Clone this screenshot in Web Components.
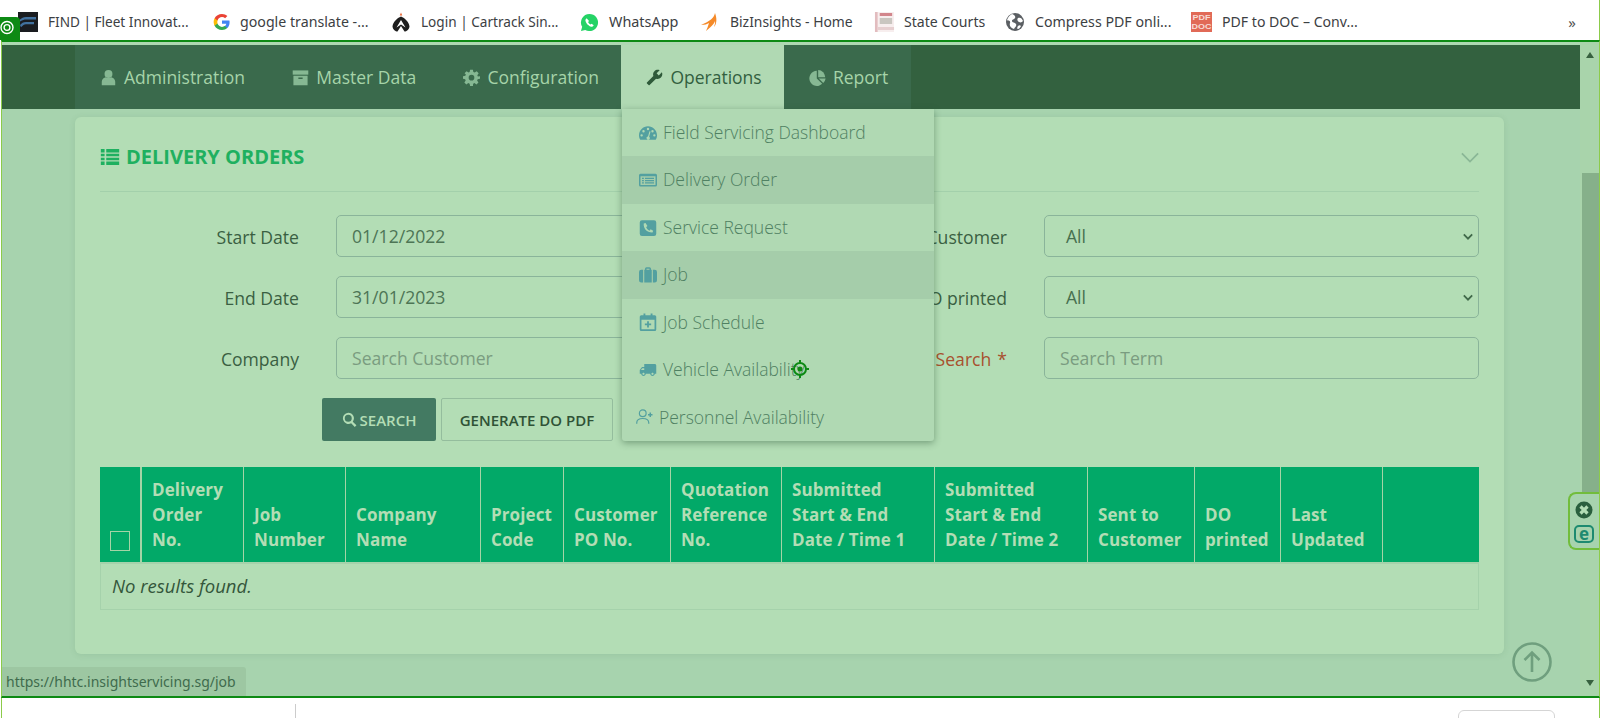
<!DOCTYPE html>
<html lang="en">
<head>
<meta charset="utf-8">
<title>Delivery Orders</title>
<style>
    html, body { margin: 0; padding: 0; background: #fff; overflow: hidden; }
    body { font-family: "Open Sans", "Liberation Sans", sans-serif; width: 1600px; height: 718px; }
</style>
</head>
<body>
<bookmark-bar>
    <bookmark-item icon="find" gap="10" width="194" size="13.6">FIND | Fleet Innovat...</bookmark-item>
    <bookmark-item icon="google" gap="8" width="179" size="14.2">google translate -...</bookmark-item>
    <bookmark-item icon="cartrack" gap="10" width="189" size="13.6">Login | Cartrack Sin...</bookmark-item>
    <bookmark-item icon="whatsapp" gap="10" width="120" size="14.4">WhatsApp</bookmark-item>
    <bookmark-item icon="biz" gap="10" width="174" size="13.9">BizInsights - Home</bookmark-item>
    <bookmark-item icon="courts" gap="9" width="132" size="14.1">State Courts</bookmark-item>
    <bookmark-item icon="globe" gap="11" width="185" size="14.2">Compress PDF onli...</bookmark-item>
    <bookmark-item icon="pdf" gap="10" width="170" size="14.1">PDF to DOC – Conv...</bookmark-item>
    <span slot="more">»</span>
</bookmark-bar>

<app-frame>
    <main-nav>
        <nav-item icon="user">Administration</nav-item>
        <nav-item icon="archive">Master Data</nav-item>
        <nav-item icon="cog">Configuration</nav-item>
        <nav-item icon="wrench" active>Operations</nav-item>
        <nav-item icon="pie">Report</nav-item>
    </main-nav>

    <order-card heading="Delivery Orders">
        <form-grid>
            <form-field label="Start Date" value="01/12/2022"></form-field>
            <form-field label="Sent to Customer" value="All" select></form-field>
            <form-field label="End Date" value="31/01/2023"></form-field>
            <form-field label="DO printed" value="All" select></form-field>
            <form-field label="Company" placeholder="Search Customer"></form-field>
            <form-field label="Search" placeholder="Search Term" required></form-field>
        </form-grid>
        <action-row></action-row>
        <orders-table></orders-table>
    </order-card>

    <op-menu slot="overlay">
        <op-menu-item icon="gauge">Field Servicing Dashboard</op-menu-item>
        <op-menu-item icon="listalt" hover>Delivery Order</op-menu-item>
        <op-menu-item icon="phone">Service Request</op-menu-item>
        <op-menu-item icon="case" hover>Job</op-menu-item>
        <op-menu-item icon="calendar">Job Schedule</op-menu-item>
        <op-menu-item icon="truck">Vehicle Availability</op-menu-item>
        <op-menu-item icon="userplus" tight>Personnel Availability</op-menu-item>
    </op-menu>
    <overlay-bits slot="overlay"></overlay-bits>
</app-frame>

<footer-strip></footer-strip>

<script>
    const ICONS = {
        user: '<circle cx="12" cy="7" r="5.6"/><path d="M2.500 23v-5C2.500 14 6 12 8 11.500c2.400 1.600 5.600 1.600 8 0 2 .5 5.500 2.500 5.500 6.500v5z"/>',
        archive: '<path d="M1 2h22v6H1z"/><path d="M2 9.500h20V23H2zM9 12v2.200h6V12z" fill-rule="evenodd"/>',
        cog: '<path fill-rule="evenodd" d="M10 1h4l.6 3.300 1.900.8L19.300 3.200l2.800 2.800-1.900 2.800.8 1.900L24 10.300v3.400l-3.300.6-.8 1.900 1.900 2.800-2.800 2.800-2.800-1.900-1.900.8L14 24h-4l-.6-3.300-1.900-.8-2.800 1.900-2.800-2.800 1.900-2.800-.8-1.900L0 13.700v-3.400l3.300-.6.8-1.900L2.200 6 5 3.200l2.800 1.900 1.600-.8zM12 8.200a4 4 0 1 0 0 8 4 4 0 0 0 0-8z"/>',
        wrench: '<path transform="translate(24 0) scale(-1 1)" d="M22.700 19l-9.100-9.100c.9-2.300.4-5-1.500-6.900-2-2-5-2.400-7.400-1.300L9 6 6 9 1.600 4.700C.4 7.100.9 10.100 2.900 12.100c1.900 1.900 4.600 2.400 6.900 1.500l9.100 9.100c.4.4 1 .4 1.400 0l2.300-2.300c.5-.4.5-1.100.1-1.400z"/>',
        pie: '<path d="M11 2.500v10.800l7.600 7.600A10.700 10.700 0 1 1 11 2.500z"/><path d="M13 1.500a10.500 10.500 0 0 1 10 10H13z"/><path d="M13.800 13.500H23.500a10.500 10.500 0 0 1-3.400 6.300z"/>',
        list: '<path d="M1 2.500h4.500v4H1zM7.500 2.500H23v4H7.500zM1 8h4.500v3.200H1zM7.500 8H23v3.200H7.500zM1 12.800h4.500V16H1zM7.500 12.800H23V16H7.500zM1 17.500h4.500v4H1zM7.500 17.500H23v4H7.500z"/>',
        search: '<path fill-rule="evenodd" d="M10 1a9 9 0 0 1 7.200 14.400l5.900 5.900-2.600 2.600-5.900-5.900A9 9 0 1 1 10 1zm0 3.400a5.600 5.600 0 1 0 0 11.200 5.600 5.600 0 0 0 0-11.200z"/>',
        gauge: '<path fill-rule="evenodd" d="M12 3C5.400 3 0 8.400 0 15c0 2.200.6 4.300 1.700 6h20.600c1.100-1.700 1.700-3.800 1.700-6 0-6.600-5.400-12-12-12zM12 5a1.600 1.600 0 1 1 0 3.200A1.600 1.600 0 0 1 12 5zM6 8a1.600 1.600 0 1 1 0 3.200A1.600 1.600 0 0 1 6 8zm12 0a1.600 1.600 0 1 1 0 3.200A1.600 1.600 0 0 1 18 8zM3.500 13.500a1.600 1.600 0 1 1 0 3.200 1.600 1.600 0 0 1 0-3.200zm17 0a1.600 1.600 0 1 1 0 3.200 1.600 1.600 0 0 1 0-3.200zM14 9.500l1.400.4-1.900 7a2.200 2.200 0 1 1-1.500-.3z"/>',
        listalt: '<path fill-rule="evenodd" d="M2 3.500h20a2 2 0 0 1 2 2v13a2 2 0 0 1-2 2H2a2 2 0 0 1-2-2v-13a2 2 0 0 1 2-2zm0 3.500v11.500h20V7zm2 2h2.500v1.700H4zm4 0h12v1.700H8zm-4 3h2.500v1.700H4zm4 0h12v1.700H8zm-4 3h2.500v1.700H4zm4 0h12v1.700H8z"/>',
        phone: '<path fill-rule="evenodd" d="M4 1.500h16a3 3 0 0 1 3 3v15a3 3 0 0 1-3 3H4a3 3 0 0 1-3-3v-15a3 3 0 0 1 3-3zm4.700 3.700L6.300 6c-.7 7 4.700 12.400 11.700 12l.9-2.500-3.400-1.700-1.500 1.700c-2-1-3.700-2.700-4.500-4.600l1.700-1.500z"/>',
        case: '<path fill-rule="evenodd" d="M8 5V3.500A2 2 0 0 1 10 1.500h4a2 2 0 0 1 2 2V5h1v17H7V5zm2-1.500V5h4V3.500zM5.500 5v17H3a3 3 0 0 1-3-3V8a3 3 0 0 1 3-3zm13 0H21a3 3 0 0 1 3 3v11a3 3 0 0 1-3 3h-2.500z"/>',
        calendar: '<path fill-rule="evenodd" d="M6 .5h2.500V3h7V.5H18V3h3a2 2 0 0 1 2 2v17a2 2 0 0 1-2 2H3a2 2 0 0 1-2-2V5a2 2 0 0 1 2-2h3zM3.300 9v12.700h17.400V9zM10.800 11h2.400v3h3v2.400h-3v3h-2.400v-3h-3V14h3z"/>',
        truck: '<path transform="translate(24 0) scale(-1 1)" d="M20 8h-3V4H3c-1.100 0-2 .9-2 2v11h2c0 1.660 1.340 3 3 3s3-1.340 3-3h6c0 1.660 1.340 3 3 3s3-1.340 3-3h2v-5l-3-4zM6 18.500c-.83 0-1.500-.67-1.500-1.500s.67-1.500 1.500-1.500 1.500.67 1.500 1.500-.67 1.500-1.500 1.500zm13.500-9l1.960 2.500H17V9.500h2.500zm-1.500 9c-.83 0-1.500-.67-1.500-1.500s.67-1.500 1.500-1.500 1.500.67 1.500 1.500-.67 1.500-1.500 1.500z"/>',
        userplus: '<g fill="none" stroke="currentColor" stroke-width="1.600"><circle cx="9" cy="7" r="4.500"/><path d="M1 21v-1.500C1 16 4 14 9 14s8 2 8 5.500V21"/><path d="M19 6v6M16 9h6" stroke-width="2"/></g>'
    };

    class AppIcon extends HTMLElement {
        connectedCallback() {
            const size = this.getAttribute('size') || 17;
            const shadow = this.attachShadow({ mode: 'open' });
            shadow.innerHTML = `
                <style>
                    :host { display: inline-flex; flex: none; width: ${size}px; height: ${size}px; color: inherit; }
                    svg { width: 100%; height: 100%; fill: currentColor; }
                </style>
                <svg viewBox="0 0 24 24">${ICONS[this.getAttribute('name')] || ''}</svg>`;
        }
    }
    customElements.define('app-icon', AppIcon);

    // favicons of the bookmark bar
    const FAVICONS = {
        find: '<rect width="20" height="20" fill="#1a1c20"/><path d="M2 7.500C4 6 5 5 8 5h10v2.500H8c-2 0-3 .5-6 2zM2 13c2-2 3-3 6-3h8v2.200H8c-2 0-3 1-5 3z" fill="#41719f"/>',
        google: '<path d="M17.600 10.200c0-.6-.1-1.200-.2-1.700H10v3.200h4.300c-.2 1-.8 1.900-1.600 2.400v2h2.600c1.500-1.400 2.300-3.400 2.300-5.900z" fill="#4285f4"/><path d="M10 18c2.200 0 4-.7 5.300-1.900l-2.600-2c-.7.5-1.600.8-2.700.8-2.100 0-3.900-1.400-4.500-3.300H2.600v2.100C3.900 16.300 6.700 18 10 18z" fill="#34a853"/><path d="M5.500 11.600c-.3-1-.3-2.200 0-3.200V6.300H2.600a8 8 0 0 0 0 7.400z" fill="#fbbc05"/><path d="M10 5.100c1.200 0 2.200.4 3.100 1.200l2.300-2.300C14 2.700 12.200 2 10 2 6.700 2 3.900 3.700 2.600 6.300l2.900 2.100C6.100 6.500 7.900 5.100 10 5.100z" fill="#ea4335"/>',
        cartrack: '<path d="M10 4.500C14 6 18 10 18.500 14.500 18 18 15.500 19.500 13.500 19.500L10 14 6.500 19.500C4.500 19.500 2 18 1.500 14.500 2 10 6 6 10 4.500z" fill="#1e1e1e"/><path d="M10 8l4.500 7.500-4.500-3-4.500 3z" fill="#fff"/><path d="M10 .5l1.300 3h-2.600z" fill="#e8612c"/>',
        whatsapp: '<path d="M10 1a9 9 0 0 0-7.700 13.600L1 19l4.500-1.200A9 9 0 1 0 10 1z" fill="#25d366"/><path d="M7 5.500L5.700 7c-.4 3 3.700 7.500 7.300 7.500l1.500-1.500-2.300-1.700-1.200.9c-1.100-.5-2-1.500-2.500-2.600l1-1.100z" fill="#fff"/>',
        biz: '<path d="M15 1C14 6 10 9 1 13c4 0 6-1 8-2-1 3-2 6-3 8 4-3 8-7 9-10 .5 2-.5 4-1 6 3-3 3-9 1-14z" fill="#f58a29"/>',
        courts: '<rect x="1" y="1" width="3" height="20" fill="#e2bcbf"/><rect x="4" y="1" width="17" height="20" fill="#f7eeee"/><rect x="6" y="7" width="13" height="6" fill="#c9c6c0"/><rect x="4" y="16" width="17" height="3" fill="#e6cfd0"/><rect x="6" y="2" width="13" height="3" fill="#d2868c"/>',
        globe: '<circle cx="9" cy="9" r="9" fill="#5b5f63"/><path d="M6 1c2 1 4 2 3 4s-3 1-3 3 3 1 4 3-1 3-2 5C5 15 3 13 4 10S1 8 1 7c1-3 3-5 5-6zM12 5c2-1 4 0 5 3-1 1-2 2-4 1s-2-3-1-4zM12 13c1-1 2-1 3 0-1 2-2 3-3 3s-1-2 0-3z" fill="#fff"/>',
        pdf: '<rect width="21" height="27" fill="#e16a57"/><text x="10.500" y="11" font-family="Liberation Sans" font-size="9" font-weight="700" text-anchor="middle" fill="#f7dcd6">PDF</text><text x="10.500" y="22.500" font-family="Liberation Sans" font-size="9" font-weight="700" text-anchor="middle" fill="#f7dcd6">DOC</text>'
    };
    const FAV_BOX = {
        find: [20, 20, '0 0 20 20'], google: [20, 20, '0 0 20 20'], cartrack: [20, 20, '0 0 20 20'],
        whatsapp: [19, 19, '0 0 20 20'], biz: [20, 20, '0 0 20 20'], courts: [21, 22, '0 0 22 22'],
        globe: [18, 18, '0 0 18 18'], pdf: [21, 20, '0 0 21 27']
    };

    class BookmarkItem extends HTMLElement {
        connectedCallback() {
            const name = this.getAttribute('icon');
            const box = FAV_BOX[name];
            const size = this.getAttribute('size');
            const shadow = this.attachShadow({ mode: 'open' });
            shadow.innerHTML = `
                <style>
                    :host { display: flex; align-items: center; gap: ${this.getAttribute('gap')}px; width: ${this.getAttribute('width')}px; flex: none; white-space: nowrap; ${size ? `font-size: ${size}px;` : ''} }
                    svg { flex: none; }
                </style>
                <svg width="${box[0]}" height="${box[1]}" viewBox="${box[2]}" preserveAspectRatio="none">${FAVICONS[name]}</svg>
                <span><slot></slot></span>`;
        }
    }
    customElements.define('bookmark-item', BookmarkItem);

    class BookmarkBar extends HTMLElement {
        constructor() {
            super();
            this.attachShadow({ mode: 'open' }).innerHTML = `
                <style>
                    :host {
                        display: flex; align-items: center; height: 40px; box-sizing: border-box;
                        padding: 4px 0 0 18px; background: #fff; color: #3c4043;
                        font: 14px/20px "Noto Sans", "Open Sans", sans-serif;
                        border-right: 1px solid #8ccb4a;
                    }
                    ::slotted([slot="more"]) { margin-left: auto; margin-right: 23px; color: #555; font-size: 15px; }
                </style>
                <slot></slot><slot name="more"></slot>`;
        }
    }
    customElements.define('bookmark-bar', BookmarkBar);

    class AppFrame extends HTMLElement {
        constructor() {
            super();
            this.attachShadow({ mode: 'open' }).innerHTML = `
                <style>
                    :host {
                        display: grid; grid-template-columns: 1fr 19px; height: 658px; box-sizing: border-box;
                        margin-left: 1px; position: relative; overflow: hidden;
                        border-top: 2px solid #0d8a14; border-bottom: 2px solid #0d8a14;
                        border-left: 1px solid #8ccb4a; border-right: 1px solid #8ccb4a;
                        background: #a7d3ae;
                    }
                    .main { padding-top: 3px; background: linear-gradient(#aed8b2 3px, transparent 3px); min-width: 0; }
                    .bar { display: flex; flex-direction: column; background: #a9d4ab; color: #37613f; align-items: center; padding-top: 10px; }
                    .up, .down { width: 0; height: 0; border-left: 4.500px solid transparent; border-right: 4.500px solid transparent; }
                    .up { border-bottom: 6px solid #37613f; }
                    .down { border-top: 6px solid #37613f; margin-top: 188px; }
                    .thumb { align-self: flex-end; width: 17px; height: 319px; margin-top: 115px; background: #86b08a; }
                </style>
                <div class="main"><slot></slot></div>
                <div class="bar"><i class="up"></i><div class="thumb"></div><i class="down"></i></div>
                <slot name="overlay"></slot>`;
        }
    }
    customElements.define('app-frame', AppFrame);

    class MainNav extends HTMLElement {
        constructor() {
            super();
            this.attachShadow({ mode: 'open' }).innerHTML = `
                <style>
                    :host { display: block; height: 64px; padding-left: 73px; background: #33613f; }
                    .in { display: flex; width: 836px; height: 100%; background: #3a6a4c; }
                </style>
                <div class="in"><slot></slot></div>`;
        }
    }
    customElements.define('main-nav', MainNav);

    class NavItem extends HTMLElement {
        connectedCallback() {
            const active = this.hasAttribute('active');
            const shadow = this.attachShadow({ mode: 'open' });
            shadow.innerHTML = `
                <style>
                    :host {
                        display: flex; align-items: center; gap: 7px; padding: 0 22.300px 0 25px; white-space: nowrap;
                        font: 17.500px/24px "Open Sans", sans-serif;
                        color: ${active ? '#33603f' : '#a6d4a9'};
                        background: ${active ? '#b0d9b3' : 'transparent'};
                    }
                    app-icon { color: ${active ? '#2f5a3a' : '#86b893'}; }
                </style>
                <app-icon name="${this.getAttribute('icon')}"></app-icon><span><slot></slot></span>`;
        }
    }
    customElements.define('nav-item', NavItem);

    class OrderCard extends HTMLElement {
        connectedCallback() {
            const shadow = this.attachShadow({ mode: 'open' });
            shadow.innerHTML = `
                <style>
                    :host {
                        display: block; width: 1429px; box-sizing: border-box; margin: 8px 0 0 73px; padding: 0 25px 44px 25px;
                        background: #b3ddb5; border-radius: 6px; box-shadow: 0 1px 6px rgba(60, 110, 70, .12);
                    }
                    header {
                        display: flex; align-items: center; height: 75px; box-sizing: border-box; padding-top: 6px;
                        border-bottom: 1px solid #a3d0ab; margin-bottom: 23px; width: 1379px;
                        color: #1fb060; font: 700 20px/24px "Open Sans", sans-serif; text-transform: uppercase;
                    }
                    h2 { margin: 0 0 0 6px; font: inherit; flex: 1; }
                    svg { width: 18px; height: 11px; fill: none; stroke: #8ab796; stroke-width: 2; }
                </style>
                <header>
                    <app-icon name="list" size="20"></app-icon>
                    <h2>${this.getAttribute('heading')}</h2>
                    <svg viewBox="0 0 20 12"><path d="M1 1.500l9 9 9-9"/></svg>
                </header>
                <slot></slot>`;
        }
    }
    customElements.define('order-card', OrderCard);

    class FormGrid extends HTMLElement {
        constructor() {
            super();
            this.attachShadow({ mode: 'open' }).innerHTML = `
                <style>
                    :host { display: grid; grid-template-columns: 670px 672px; column-gap: 37px; row-gap: 19px; width: 1379px; }
                </style>
                <slot></slot>`;
        }
    }
    customElements.define('form-grid', FormGrid);

    class FormField extends HTMLElement {
        connectedCallback() {
            const value = this.getAttribute('value');
            const holder = this.getAttribute('placeholder');
            const isSelect = this.hasAttribute('select');
            const required = this.hasAttribute('required');
            const shadow = this.attachShadow({ mode: 'open' });
            shadow.innerHTML = `
                <style>
                    :host {
                        display: grid; grid-template-columns: 1fr auto; column-gap: 37px; align-items: center;
                        font: 17.600px/24px "Open Sans", sans-serif; color: #3a5f42;
                    }
                    label { text-align: right; white-space: nowrap; padding-top: 1px; }
                    label.req { color: #a8502e; }
                    label b { font-weight: 400; margin-left: 6px; }
                    .control {
                        display: flex; align-items: center; justify-content: space-between; height: 42px; width: ${isSelect || required ? 435 : 434}px; box-sizing: border-box;
                        padding: 0 5px 0 15px; border: 1px solid #8ab49a; border-radius: 5px; color: #4d7555;
                    }
                    .control.sel { padding-left: 21px; color: #47704f; }
                    .holder { color: #7a9c80; }
                    svg { width: 10px; height: 7px; fill: none; stroke: #41694a; stroke-width: 2.200; }
                </style>
                <label class="${required ? 'req' : ''}">${this.getAttribute('label')}${required ? '<b>*</b>' : ''}</label>
                <div class="control ${isSelect ? 'sel' : ''}">
                    ${holder ? `<span class="holder">${holder}</span>` : `<span>${value}</span>`}
                    ${isSelect ? '<svg viewBox="0 0 12 8"><path d="M1 1.500l5 5 5-5"/></svg>' : ''}
                </div>`;
        }
    }
    customElements.define('form-field', FormField);

    class ActionRow extends HTMLElement {
        constructor() {
            super();
            this.attachShadow({ mode: 'open' }).innerHTML = `
                <style>
                    :host { display: flex; gap: 5px; margin: 19px 0 26px 222px; font: 600 15px/20px "Open Sans", sans-serif; }
                    button {
                        display: flex; align-items: center; justify-content: center; gap: 3px; height: 43px; box-sizing: border-box;
                        font: inherit; border-radius: 2px; padding: 0; cursor: pointer;
                    }
                    .search { width: 114px; border: 0; background: #437a62; color: #b3ddb5; }
                    .pdf { width: 172px; border: 1px solid #94bd9d; background: transparent; color: #2f5236; }
                </style>
                <button class="search"><app-icon name="search" size="15"></app-icon>SEARCH</button>
                <button class="pdf">GENERATE DO PDF</button>`;
        }
    }
    customElements.define('action-row', ActionRow);

    const COLUMNS = [
        [42, ''], [102, 'Delivery<br>Order<br>No.'], [102, 'Job<br>Number'], [135, 'Company<br>Name'],
        [83, 'Project<br>Code'], [107, 'Customer<br>PO No.'], [111, 'Quotation<br>Reference<br>No.'],
        [153, 'Submitted<br>Start &amp; End<br>Date / Time 1'], [153, 'Submitted<br>Start &amp; End<br>Date / Time 2'],
        [107, 'Sent to<br>Customer'], [86, 'DO<br>printed'], [102, 'Last<br>Updated'], [96, '']
    ];

    class OrdersTable extends HTMLElement {
        constructor() {
            super();
            const cells = COLUMNS.map((col, i) =>
                i === 0 ? '<div class="th first"><i class="check"></i></div>' : `<div class="th">${col[1]}</div>`).join('');
            this.attachShadow({ mode: 'open' }).innerHTML = `
                <style>
                    :host { display: block; width: 1379px; font-family: "Open Sans", sans-serif; }
                    .head {
                        display: grid; grid-template-columns: ${COLUMNS.map(c => c[0] + 'px').join(' ')};
                        height: 95px; background: #02a968; color: #b3ddb5; border-bottom: 2px solid #a5d2ab; box-sizing: content-box;
                        font: 700 17px/25px "Open Sans", sans-serif; letter-spacing: .1px;
                    }
                    .th { display: flex; align-items: flex-end; padding: 0 0 10px 10px; border-right: 1px solid #a4d4a6; white-space: nowrap; box-sizing: border-box; }
                    .th:last-child { border-right: 0; }
                    .first { border-right-width: 2px; padding: 0 0 9px 10px; }
                    .check { display: block; width: 20px; height: 20px; box-sizing: border-box; border: 1px solid #a4d4a6; margin-bottom: 2px; }
                    .empty {
                        height: 46px; box-sizing: border-box; padding: 0 0 2px 11px; display: flex; align-items: center;
                        border: 1px solid #a5d2ab; border-top: 0; color: #34563b; font: italic 18.500px/24px "Open Sans", sans-serif;
                    }
                </style>
                <div class="head">${cells}</div>
                <div class="empty">No results found.</div>`;
        }
    }
    customElements.define('orders-table', OrdersTable);

    class OpMenu extends HTMLElement {
        constructor() {
            super();
            this.attachShadow({ mode: 'open' }).innerHTML = `
                <style>
                    :host {
                        position: absolute; left: 620px; top: 67px; width: 312px; height: 332px;
                        display: grid; grid-auto-rows: 1fr; background: #b0d9b3; border-radius: 0 0 3px 3px;
                        box-shadow: 0 2px 7px rgba(40, 80, 50, .45); overflow: hidden;
                    }
                </style>
                <slot></slot>`;
        }
    }
    customElements.define('op-menu', OpMenu);

    class OpMenuItem extends HTMLElement {
        connectedCallback() {
            const tight = this.hasAttribute('tight');
            const shadow = this.attachShadow({ mode: 'open' });
            shadow.innerHTML = `
                <style>
                    :host {
                        display: flex; align-items: center; gap: ${tight ? 5 : 6}px; padding-left: ${tight ? 14 : 17}px;
                        font: 300 17.500px/24px "Open Sans", sans-serif; color: #4f8062; white-space: nowrap;
                        background: ${this.hasAttribute('hover') ? '#a5cdaa' : 'transparent'};
                    }
                    span { margin-top: -1.400px; }
                    app-icon { color: #53a0a0; }
                </style>
                <app-icon name="${this.getAttribute('icon')}" size="18"></app-icon><span><slot></slot></span>`;
        }
    }
    customElements.define('op-menu-item', OpMenuItem);

    // everything that floats above the page: extension badges, status tip, back-to-top
    class OverlayBits extends HTMLElement {
        constructor() {
            super();
            this.attachShadow({ mode: 'open' }).innerHTML = `
                <style>
                    :host { display: contents; }
                    .status {
                        position: absolute; left: -1px; bottom: 0; width: 245px; height: 29px; box-sizing: border-box; padding: 0 0 0 5px;
                        display: flex; align-items: center; background: #9dc7a2; border-radius: 0 3px 0 0; white-space: nowrap;
                        font: 14px/20px "Noto Sans", "Open Sans", sans-serif; color: #3f6b4d;
                    }
                    .top { position: absolute; left: 1510px; top: 600px; width: 40px; height: 40px; }
                    .target { position: absolute; left: 788px; top: 317px; width: 20px; height: 20px; }
                    .tab {
                        position: absolute; left: 1566px; top: 450px; width: 32px; height: 58px; box-sizing: border-box;
                        border: 2px solid #72bd3c; border-right: 0; border-radius: 8px 0 0 8px; background: #a7d3ae;
                    }
                    .tab svg { position: absolute; left: 4px; }
                    .tab b {
                        position: absolute; left: 4px; top: 31px; width: 20px; height: 18px; box-sizing: border-box; border: 2px solid #1d8a70;
                        border-radius: 5px; color: #1d8a70; font: 700 17px/13px "Open Sans", sans-serif; text-align: center;
                    }
                </style>
                <div class="status">https://hhtc.insightservicing.sg/job</div>
                <svg class="top" viewBox="0 0 40 40" fill="none" stroke="#6f9f7e" stroke-width="2.600">
                    <circle cx="20" cy="20" r="18.500"/><path d="M20 30V11M12.500 18l7.500-7.500 7.500 7.500"/>
                </svg>
                <svg class="target" viewBox="0 0 20 20" fill="none" stroke="#0d8a14" stroke-width="2">
                    <circle cx="10" cy="10" r="6"/><circle cx="10" cy="10" r="1.500" fill="#0d8a14"/><path d="M10 1v3M10 16v3M1 10h3M16 10h3"/>
                </svg>
                <div class="tab">
                    <svg style="top:7px" width="20" height="18" viewBox="0 0 20 18">
                        <circle cx="10" cy="9" r="8.500" fill="#2a5f3e"/><path d="M6.500 5.500l7 7M13.500 5.500l-7 7" stroke="#b3ddb5" stroke-width="3.200"/>
                    </svg>
                    <b>e</b>
                </div>`;
        }
    }
    customElements.define('overlay-bits', OverlayBits);

    class FooterStrip extends HTMLElement {
        constructor() {
            super();
            this.attachShadow({ mode: 'open' }).innerHTML = `
                <style>
                    :host {
                        display: flex; height: 20px; box-sizing: border-box; margin-left: 1px; background: #fff;
                        border-left: 1px solid #8ccb4a; border-right: 1px solid #8ccb4a; overflow: hidden;
                    }
                    .side { width: 293px; margin-top: 6px; border-right: 1px solid #ccc; }
                    .btn { width: 97px; height: 30px; margin: 12px 44px 0 auto; box-sizing: border-box; border: 1px solid #d5d5d5; border-radius: 6px; }
                </style>
                <div class="side"></div><div class="btn"></div>`;
        }
    }
    customElements.define('footer-strip', FooterStrip);

    // the green badge that sits over the corner of the bookmark bar
    class CornerBadge extends HTMLElement {
        constructor() {
            super();
            this.attachShadow({ mode: 'open' }).innerHTML = `
                <style>
                    :host { position: absolute; left: 0; top: 17px; width: 20px; height: 23px; background: #0d8a14; border-radius: 0 4px 0 0; display: flex; padding-top: 3px; box-sizing: border-box; }
                    svg { width: 15px; height: 15px; }
                </style>
                <svg viewBox="0 0 15 15" fill="none" stroke="#fff" stroke-width="1.400"><circle cx="7" cy="7.500" r="6"/><circle cx="7" cy="7.500" r="2.900"/></svg>`;
        }
    }
    customElements.define('corner-badge', CornerBadge);
    document.body.appendChild(document.createElement('corner-badge'));
</script>
</body>
</html>
